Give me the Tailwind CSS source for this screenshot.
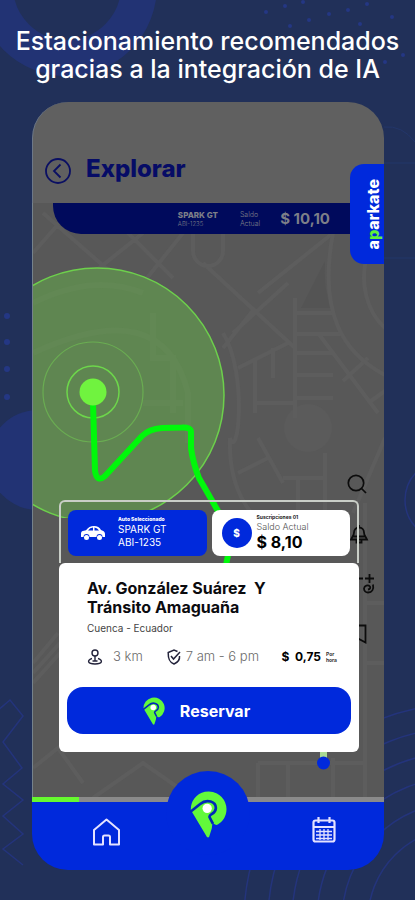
<!DOCTYPE html>
<html lang="es">
<head>
    <meta charset="UTF-8">
    <meta name="viewport" content="width=device-width, initial-scale=1.0">
    <title>Aparkate - Explorar</title>
    <script src="https://cdn.jsdelivr.net/npm/@tailwindcss/browser@4"></script>
</head>
<body class="bg-[#213059]">
  <main class="relative min-h-screen overflow-hidden pb-7 font-['Inter',sans-serif]">

    <!-- Background shapes -->
    <svg class="absolute inset-0 h-full w-full" viewBox="0 0 415 900" preserveAspectRatio="xMidYMid slice" fill="none" aria-hidden="true">
      <circle cx="67" cy="-14" r="72" stroke="#223374" stroke-width="36" />
      <circle cx="38" cy="460" r="50" fill="#223374" />
      <g fill="#243784">
        <circle cx="285" cy="6" r="2" /><circle cx="303" cy="2" r="2" /><circle cx="329" cy="14" r="2" /><circle cx="348" cy="10" r="2" />
        <circle cx="367" cy="4" r="2" /><circle cx="392" cy="17" r="2" /><circle cx="309" cy="20" r="2" /><circle cx="290" cy="26" r="2" />
        <circle cx="266" cy="12" r="2" /><circle cx="360" cy="24" r="2" /><circle cx="385" cy="62" r="2" /><circle cx="403" cy="55" r="2" />
        <circle cx="7" cy="316" r="3" /><circle cx="7" cy="342" r="3" /><circle cx="7" cy="369" r="3" /><circle cx="7" cy="397" r="3" />
      </g>
      <path d="M-4 712L10 700L23 716L3 742L22 768L3 784L23 800L3 816L23 834L3 849L23 865" stroke="#24347c" stroke-width="1.5" />
      <g stroke="#24347c" stroke-width="1.5">
        <circle cx="460" cy="920" r="92" /><circle cx="460" cy="920" r="118" /><circle cx="460" cy="920" r="143" />
        <circle cx="460" cy="920" r="168" /><circle cx="460" cy="920" r="192" /><circle cx="460" cy="920" r="216" />
        <circle cx="445" cy="500" r="40" />
        <path d="M384 163H415M384 258H415M384 127Q402 125 415 142" stroke-width="1" stroke="#23366a" />
      </g>
    </svg>

    <h1 class="relative pt-[27px] text-center text-[25px] leading-[28px] font-medium text-white">Estacionamiento recomendados<br>gracias a la integración de IA</h1>

    <!-- Phone -->
    <div class="relative mt-[19px] mr-[31px] ml-[32px]">
      <header class="flex h-[101px] items-end gap-[15px] rounded-t-[36px] border-l border-[#6d7888] bg-[#606060] pb-[18px] pl-3">
        <button class="mb-px" aria-label="Volver">
          <svg class="h-[26px] w-[26px]" viewBox="0 0 26 26" fill="none" stroke="#0a0f63" stroke-width="1.8">
            <circle cx="13" cy="13" r="12" />
            <path d="M15.500 6.500L9 13l6.500 6.500" />
          </svg>
        </button>
        <h2 class="text-[24px] leading-[32px] font-extrabold text-[#060c66]">Explorar</h2>
      </header>

      <!-- Side tab -->
      <div class="absolute top-[62px] right-0 z-10 flex h-[100px] w-[34px] items-center justify-center rounded-l-[14px] bg-[#0029dc] pl-3">
        <span class="rotate-180 text-[16px] leading-[20px] font-extrabold text-white [writing-mode:vertical-rl]">a<span class="text-[#5ff03a]">p</span>arkate</span>
      </div>

      <section class="relative overflow-hidden border-l border-[#75828c] bg-[#585858] pb-[45px]">
        <!-- Map -->
        <svg class="absolute top-0 left-0 h-[595px] w-[352px]" viewBox="0 0 352 595" fill="none" aria-hidden="true">
          <defs>
            <clipPath id="radius-area"><rect width="352" height="315" /></clipPath>
          </defs>
          <circle cx="275" cy="225" r="24" fill="#5b5b5b" />
          <path d="M268 105L292 58Q290 85 298 105Z" fill="#545454" />
          <g stroke="#5d5d5d" stroke-width="4">
            <path d="M0 50L35 10M10 10L90 80M60 70L110 30M90 25L140 75M150 30L110 80M190 28v20a15 15 0 0 1-30 0v-20M225 90L300 30M170 60L262 145M200 130L255 80M190 145L222 105M205 165L255 140M222 155V210M240 145V175M222 200H262M262 110H300M262 131H308M262 150H300M262 172H300M262 195H300M285 130L345 210M310 178L335 155M338 198L352 188" />
            <path d="M300 30C285 110 310 150 352 172M335 50C325 80 335 110 352 125M262 95V215" />
            <path d="M190 130C215 170 205 260 197 235C195 290 220 320 250 335M225 235L250 280M205 270L235 255M250 275H290M292 250V340M265 275V340M352 235L320 310" />
            <path d="M0 460L25 430M0 470L27 440M0 480L27 450M0 565L25 545L50 580M60 595L110 560L160 595M332 300V595M332 400H352M332 460H352M225 560H330M225 560V595M255 560V595M300 555V595" />
          </g>

          <!-- Search radius -->
          <g clip-path="url(#radius-area)">
            <circle cx="64" cy="192" r="127" fill="#5f8651" />
            <path d="M0 100Q60 70 110 90M0 150Q130 90 155 190V240M120 110V155H140V210M110 200H150" stroke="#628854" stroke-width="6" />
            <circle cx="64" cy="192" r="127" stroke="#6dd04c" stroke-width="1.500" />
          </g>
          <circle cx="60" cy="189" r="50" stroke="#6aad52" stroke-width="1.200" />
          <circle cx="60" cy="189" r="26" stroke="#6dd64b" stroke-width="1.500" />
          <path d="M60 200L62 268Q64 280 72 273L109 233Q116 226 129 225L149 224.500Q158 224 158 229L158 245Q160 260 166 275L185 308L199 333L193 362" stroke="#00f80a" stroke-width="6" stroke-linejoin="round" />
          <circle cx="60" cy="189" r="13.500" fill="#70f33f" />
          <path d="M290.500 540V556" stroke="#a9d993" stroke-width="7" />
          <circle cx="290.500" cy="560" r="6.500" fill="#0029dc" />
        </svg>

        <!-- Map tools -->
        <nav class="absolute top-[271px] right-[7px] flex flex-col gap-[30px] text-[#0c0c0c]" aria-label="Herramientas del mapa">
          <button class="flex h-5 w-[30px] justify-start" aria-label="Buscar">
            <svg class="h-5 w-5" viewBox="0 0 20 20" fill="none" stroke="currentColor" stroke-width="1.700"><circle cx="9" cy="9" r="7.700" /><path d="M14.500 14.500L19 19" /></svg>
          </button>
          <button class="flex h-5 w-[30px] justify-start" aria-label="Avisos">
            <svg class="h-5 w-[22px]" viewBox="0 0 22 20" fill="none" stroke="currentColor" stroke-width="1.800"><path d="M12 3.500a5 5 0 0 0-5 5c0 3-1.500 3.500-3 7h16c-1.500-3.500-3-4-3-7a5 5 0 0 0-5-5zM12 3.500V1M5 12.500h14M9.500 16v2.500h5V16" /></svg>
          </button>
          <button class="flex h-5 w-[30px] justify-end pr-px" aria-label="Agregar ruta">
            <svg class="h-5 w-[18px]" viewBox="0 0 18 20" fill="none" stroke="currentColor" stroke-width="1.800"><path d="M11.500 0v9M7 4.500h9M1 4.500h4M15 10.500c1 5-1 8-5 8a4 4 0 0 1-4-4a3.500 3.500 0 0 1 6-2q1 2.500-2 3" /></svg>
          </button>
          <button class="flex h-5 w-[30px] justify-start" aria-label="Guardar">
            <svg class="h-5 w-5" viewBox="0 0 20 20" fill="none" stroke="currentColor" stroke-width="1.800"><path d="M5 1.500h13.500v17L12 15l-7 3.500z" /></svg>
          </button>
        </nav>

        <!-- Balance strip -->
        <div class="relative ml-5 flex h-[31px] items-center justify-end rounded-bl-[28px] bg-[#000a5c] pr-[54px] text-[#7d7f88]">
          <p class="text-[8px] leading-[10px] font-extrabold">SPARK GT<span class="block text-[6px] leading-[8px] font-light">ABI-1235</span></p>
          <p class="ml-[22px] text-[7px] leading-[9px] font-light">Saldo<br>Actual</p>
          <p class="ml-5 text-[15px] leading-5 font-bold">$ 10,10</p>
        </div>

        <!-- Parking card -->
        <article class="relative mt-[266px] mr-[25px] ml-[26px]">
          <div class="grid grid-cols-2 gap-[5px] rounded-t-md border-2 border-b-0 border-[#c9cec7] px-[7px] pt-2 pb-[7px]">
            <div class="flex h-[46px] items-center rounded-lg bg-[#0029dc] pl-3 text-white">
              <svg class="h-[16px] w-[26px]" viewBox="0 0 26 16" aria-hidden="true">
                <path fill="#fff" d="M1 8.500Q1 6 4 5.700L6 5.300Q9 1 14 1T21 5Q25 6 25 9v3h-2.500a3 3 0 0 0-6 0H9.500a3 3 0 0 0-6 0H1z" />
                <path fill="#0029dc" d="M8 5.500Q10 2.700 13 2.600V5.500zM14.500 2.600Q17.500 3 19 5.500H14.500z" />
                <circle cx="6.500" cy="12.500" r="2.500" fill="#fff" /><circle cx="19.500" cy="12.500" r="2.500" fill="#fff" />
              </svg>
              <p class="ml-3 pb-px text-[10px] leading-[13px]"><span class="block text-[5px] leading-[7px] font-extrabold">Auto Seleccionado</span>SPARK GT<br>ABI-1235</p>
            </div>
            <div class="flex h-[46px] items-center rounded-lg bg-white pl-2.5">
              <span class="flex h-[30px] w-[30px] items-center justify-center rounded-full bg-[#0029dc] text-[10px] font-extrabold text-white">$</span>
              <p class="ml-[5px] pb-px text-[9px] leading-[11px] font-light text-[#555]"><span class="block text-[5px] leading-[7px] font-bold text-[#222]">Suscripciones 01</span>Saldo Actual<strong class="block text-[16px] leading-[20px] font-bold text-black">$ 8,10</strong></p>
            </div>
          </div>

          <div class="rounded-md bg-white px-2 pt-4 pb-[18px]">
            <div class="pr-[14px] pl-5">
              <h3 class="text-[16px] leading-[19px] font-bold text-[#0b0b0f]">Av. González Suárez&nbsp; Y<br>Tránsito Amaguaña</h3>
              <p class="mt-[2px] text-[10px] leading-[18px] text-[#444]">Cuenca - Ecuador</p>
              <div class="mt-2.5 flex h-5 items-center text-[13px] text-[#6c6c6c]">
                <svg class="h-4 w-4" viewBox="0 0 16 16" fill="none" stroke="#22223a" stroke-width="1.400" aria-hidden="true">
                  <circle cx="8" cy="4" r="3" /><path d="M8 7v5M5 9.500C0 11 0 15 8 15s8-4 3-5.500M5.500 12h5" />
                </svg>
                <span class="ml-2.5 font-light">3 km</span>
                <svg class="ml-[24px] h-4 w-[14px]" viewBox="0 0 14 16" fill="none" stroke="#22223a" stroke-width="1.500" aria-hidden="true">
                  <path d="M12.500 7c.5 4-2 6.500-5.500 8C3 13.500 1 11 1.200 3.500L7 1l3.500 1.500M4 7l2.500 3L13 3" />
                </svg>
                <span class="ml-[5px] font-light">7 am - 6 pm</span>
                <strong class="ml-auto text-[12px] font-bold text-black">$ &nbsp;0,75</strong>
                <span class="ml-[5px] text-[5px] leading-[6px] font-bold text-[#333]">Por<br>hora</span>
              </div>
            </div>
            <button class="mt-5 flex h-[47px] w-full items-center justify-center gap-[14px] rounded-[16px] bg-[#0029dc] pr-[26px] text-[16px] font-bold text-white">
              <svg class="h-[29px] w-[24px]" viewBox="0 0 110 147" fill="none" aria-hidden="true">
                <path fill="#62f93b" d="M2 63A53.500 53.500 0 1 1 84 106Q74 112 67 98L65 118L57 143Q52 150 45 135Z" />
                <path stroke="#0029b8" stroke-width="8" d="M0 69L30 45C50 28 78 38 77 58C76 76 56 75 58 84L68 104" />
                <circle cx="51" cy="58" r="14" fill="#fff" />
              </svg>
              Reservar
            </button>
          </div>
        </article>
      </section>

      <!-- Bottom bar -->
      <div class="h-[5px] bg-[#8a8a8a]"><div class="h-full w-[47px] bg-[#66f92f]"></div></div>
      <nav class="relative flex h-[68px] items-center justify-between rounded-b-[36px] bg-[#0029dc] px-[60px] pb-3">
        <a href="#inicio" aria-label="Inicio">
          <svg class="mt-1 h-7 w-7" viewBox="0 0 28 28" fill="none" stroke="#e4e2ff" stroke-width="2" stroke-linejoin="round"><path d="M2 12L14.500 1.500L27 12V26.500H18V19q0-1.500-1.500-1.500h-4Q11 17.500 11 19v7.500H2z" /></svg>
        </a>
        <a class="absolute -top-[31px] left-1/2 flex h-[84px] w-[84px] -translate-x-1/2 items-center justify-center rounded-full bg-[#0029dc]" href="#aparkate" aria-label="Aparkate">
          <svg class="h-[49px] w-[37px]" viewBox="0 0 110 147" fill="none" aria-hidden="true">
            <path fill="#62f93b" d="M2 63A53.500 53.500 0 1 1 84 106Q74 112 67 98L65 118L57 143Q52 150 45 135Z" />
            <path stroke="#0029b8" stroke-width="8" d="M0 69L30 45C50 28 78 38 77 58C76 76 56 75 58 84L68 104" />
            <circle cx="51" cy="58" r="14" fill="#fff" />
          </svg>
        </a>
        <a class="-mr-3" href="#reservas" aria-label="Reservas">
          <svg class="h-[26px] w-6" viewBox="0 0 24 26" fill="none" stroke="#e4e2ff" stroke-width="2.200"><rect x="1.500" y="3.500" width="21" height="21" rx="2" /><path d="M1.500 10h21M6.500 0v6M17.500 0v6" /><path stroke-width="1.300" d="M4 14.500h16M4 18h16M4 21.500h16M8 12v11M12 12v11M16 12v11" /></svg>
        </a>
      </nav>
    </div>
  </main>
</body>
</html>
